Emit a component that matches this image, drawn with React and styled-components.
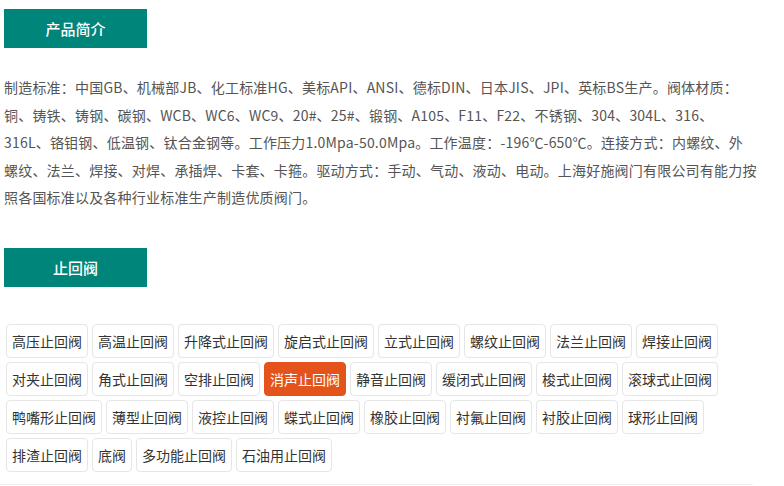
import styled, { createGlobalStyle } from "styled-components";

const GlobalStyle = createGlobalStyle`
  body {
    margin: 0;
    background: #fff;
    font-family: "Noto Sans CJK SC", "Noto Sans", sans-serif;
  }
`;

const Page = styled.div`
  width: 753px;
  padding-top: 9px;
`;

const SectionTitle = styled.h2`
  width: 143px;
  height: 39px;
  margin: 0 0 0 4px;
  display: flex;
  align-items: center;
  justify-content: center;
  background: #00857a;
  color: #fff;
  font-size: 15px;
  font-weight: 500;
`;

const Intro = styled.p`
  margin: 26px 0 36px 4px;
  color: #555;
  font-size: 14px;
  line-height: 27.5px;
  letter-spacing: 0.2px;
  white-space: nowrap;
`;

const TagList = styled.div`
  display: flex;
  flex-wrap: wrap;
  gap: 4px;
  margin-top: 37px;
  padding: 0 0 12px 6px;
  border-bottom: 1px solid #eee;
`;

const Tag = styled.a`
  display: block;
  height: 34px;
  box-sizing: border-box;
  padding: 0 5px;
  border: 1px solid ${(p) => (p.$active ? "#e4531b" : "#e6e6e6")};
  border-radius: 4px;
  background: ${(p) => (p.$active ? "#e4531b" : "#fff")};
  color: ${(p) => (p.$active ? "#fff" : "#333")};
  font-size: 14px;
  line-height: 32px;
  white-space: nowrap;
  text-decoration: none;
`;

const introLines = [
  "制造标准：中国GB、机械部JB、化工标准HG、美标API、ANSI、德标DIN、日本JIS、JPI、英标BS生产。阀体材质：",
  "铜、铸铁、铸钢、碳钢、WCB、WC6、WC9、20#、25#、锻钢、A105、F11、F22、不锈钢、304、304L、316、",
  "316L、铬钼钢、低温钢、钛合金钢等。工作压力1.0Mpa-50.0Mpa。工作温度：-196℃-650℃。连接方式：内螺纹、外",
  "螺纹、法兰、焊接、对焊、承插焊、卡套、卡箍。驱动方式：手动、气动、液动、电动。上海好施阀门有限公司有能力按",
  "照各国标准以及各种行业标准生产制造优质阀门。",
];

const tags = [
  "高压止回阀", "高温止回阀", "升降式止回阀", "旋启式止回阀", "立式止回阀", "螺纹止回阀",
  "法兰止回阀", "焊接止回阀", "对夹止回阀", "角式止回阀", "空排止回阀", "消声止回阀",
  "静音止回阀", "缓闭式止回阀", "梭式止回阀", "滚球式止回阀", "鸭嘴形止回阀", "薄型止回阀",
  "液控止回阀", "蝶式止回阀", "橡胶止回阀", "衬氟止回阀", "衬胶止回阀", "球形止回阀",
  "排渣止回阀", "底阀", "多功能止回阀", "石油用止回阀",
];

const App = () => {
  return (
    <Page>
      <GlobalStyle />
      <SectionTitle>产品简介</SectionTitle>
      <Intro>
        {introLines.map((line, i) => (
          <span key={i}>
            {line}
            {i < introLines.length - 1 && <br />}
          </span>
        ))}
      </Intro>
      <SectionTitle>止回阀</SectionTitle>
      <TagList>
        {tags.map((t) => (
          <Tag key={t} href="#" $active={t === "消声止回阀"}>
            {t}
          </Tag>
        ))}
      </TagList>
    </Page>
  );
};

export default App;
